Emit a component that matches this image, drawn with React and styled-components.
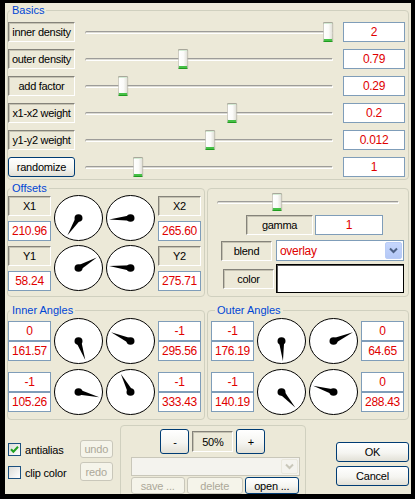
import React from 'react'
import styled, { createGlobalStyle } from 'styled-components'

const GlobalStyle = createGlobalStyle`
  html, body {
    margin: 0;
    padding: 0;
    background: #000;
  }
  body {
    font-family: "Liberation Sans", Arial, sans-serif;
    font-size: 11px;
  }
  * {
    box-sizing: border-box;
  }
`

const Window = styled.div`
  margin: 3px 0 0 5px;
  width: 406px;
  height: 491px;
  padding: 0 2px;
  background: #ece9d8;
  overflow: hidden;
  display: flex;
  flex-direction: column;
`

const Group = styled.fieldset`
  margin: ${p => p.$mt || 0}px 0 0;
  padding: ${p => p.$pad || '0'};
  width: ${p => p.$w}px;
  ${p => (p.$h ? `height: ${p.$h}px;` : '')}
  border: 1px solid #d0d0bf;
  border-radius: 4px;
  min-width: 0;
`

const Legend = styled.legend`
  margin-left: ${p => p.$ml || 2}px;
  padding: 0 2px;
  color: #0046d5;
  font-size: 11px;
  line-height: 12px;
`

const Rows = styled.div`
  display: flex;
  flex-direction: column;
  gap: 7px;
`

const BasicRow = styled.div`
  display: grid;
  grid-template-columns: 67px 258px 62px;
  column-gap: 5px;
  align-items: center;
  height: 20px;
`

const Caption = styled.div`
  width: ${p => (p.$w ? `${p.$w}px` : 'auto')};
  height: ${p => p.$h || 20}px;
  border: 1px solid;
  border-color: #85837a #ffffff #ffffff #85837a;
  box-shadow: inset 1px 1px 0 #c5c2b2;
  display: flex;
  align-items: center;
  justify-content: center;
  color: #000;
  font-size: 11px;
  font-weight: 400;
  letter-spacing: -0.3px;
  white-space: nowrap;
`

const ValueBox = styled.div`
  width: ${p => (p.$w ? `${p.$w}px` : 'auto')};
  height: ${p => p.$h || 20}px;
  background: #fff;
  border: 1px solid #7f9db9;
  color: #e00000;
  font-size: 12px;
  letter-spacing: -0.3px;
  display: flex;
  align-items: center;
  justify-content: center;
`

const Button = styled.button`
  width: ${p => p.$w}px;
  height: ${p => p.$h}px;
  padding: 0;
  font: 400 11px "Liberation Sans", Arial, sans-serif;
  letter-spacing: -0.2px;
  color: #000;
  border: 1px solid #003c74;
  border-radius: 3px;
  background: linear-gradient(180deg, #ffffff 0%, #f5f5f1 55%, #e2e0d6 100%);
  &:disabled {
    border-color: #c9c7ba;
    color: #aca899;
    background: #f5f4ea;
  }
`

const SliderBox = styled.div`
  display: flex;
  align-items: center;
  height: ${p => p.$h}px;
  padding: 0 ${p => p.$pr}px 0 ${p => p.$pl}px;
`

const Track = styled.div`
  position: relative;
  flex: 1;
  height: 3px;
  border-radius: 2px;
  border-top: 1px solid #9d9c99;
  border-left: 1px solid #b5b4ae;
  border-bottom: 1px solid #ffffff;
  border-right: 1px solid #ffffff;
  background: #dcdbd3;
`

const Lane = styled.div`
  position: absolute;
  left: 1px;
  right: 3px;
  top: 0;
  height: 0;
`

const Thumb = styled.div`
  position: absolute;
  top: 0;
  width: 11px;
  height: ${p => p.$h}px;
  transform: translate(-50%, -50%);
  border: 1px solid #a8a79b;
  border-bottom-color: #1e9b1e;
  border-radius: 2px;
  background: linear-gradient(90deg, #ffffff 0%, #fbfbf9 55%, #dfded6 100%);
  box-shadow: inset 0 -2px 0 #46c046, inset 0 1px 0 #d4ecd4;
`

const Slider = ({ pos, h = 20, thumbH = 20, pl, pr }) => (
  <SliderBox $h={h} $pl={pl} $pr={pr}>
    <Track>
      <Lane>
        <Thumb $h={thumbH} style={{ left: `${pos * 100}%` }} />
      </Lane>
    </Track>
  </SliderBox>
)

const MidRow = styled.div`
  display: flex;
  gap: 2px;
  margin-top: 2px;
`

const DialGrid = styled.div`
  display: flex;
  flex-direction: column;
  gap: ${p => p.$gap}px;
`

const DialRow = styled.div`
  display: grid;
  grid-template-columns: ${p => p.$cols};
  column-gap: 3px;
  align-items: center;
  height: 46px;
`

const Stack = styled.div`
  display: flex;
  flex-direction: column;
  gap: ${p => p.$gap || 0}px;
`

const GammaBody = styled.div`
  display: flex;
  flex-direction: column;
`

const FormRow = styled.div`
  display: flex;
  align-items: center;
  gap: ${p => p.$gap}px;
  margin: ${p => p.$mt}px 0 0 ${p => p.$ml}px;
`

const SliderHolder = styled.div`
  width: ${p => p.$w}px;
`

const Select = styled.div`
  width: ${p => p.$w}px;
  height: ${p => p.$h}px;
  border: 1px solid ${p => (p.$disabled ? '#c9c7ba' : '#7f9db9')};
  background: ${p => (p.$disabled ? '#f4f3ee' : '#fff')};
  display: flex;
  align-items: center;
  justify-content: space-between;
  padding: 1px;
`

const SelectText = styled.span`
  padding-left: 2px;
  color: #e00000;
  font-size: 12px;
  letter-spacing: -0.3px;
`

const DropButton = styled.div`
  width: 17px;
  height: 100%;
  border-radius: 2px;
  display: flex;
  align-items: center;
  justify-content: center;
  background: ${p =>
    p.$disabled ? '#f4f3ee' : 'linear-gradient(180deg, #c6d6fc 0%, #b4c8f6 100%)'};
  border: 1px solid ${p => (p.$disabled ? '#eae8dd' : '#b9ccf6')};
`

const ColorBox = styled.div`
  width: 128px;
  height: 29px;
  background: #fff;
  border: 1px solid #000;
  box-shadow: inset 1px 1px 0 #555;
`

const BottomBar = styled.div`
  display: flex;
  align-items: flex-start;
  flex: 1;
`

const CheckCol = styled.div`
  width: 73px;
  padding: 23px 0 0 1px;
  display: flex;
  flex-direction: column;
  gap: 10px;
`

const CheckRow = styled.label`
  display: flex;
  align-items: center;
  gap: 4px;
  height: 13px;
  color: #000;
  font-size: 11px;
  letter-spacing: -0.2px;
`

const CheckBox = styled.span`
  width: 13px;
  height: 13px;
  border: 1px solid #1c5180;
  background: linear-gradient(135deg, #dcdcd7 0%, #ffffff 100%);
  display: flex;
  align-items: center;
  justify-content: center;
`

const ButtonCol = styled.div`
  display: flex;
  flex-direction: column;
  gap: 4px;
  padding-top: ${p => p.$pt}px;
  margin-left: ${p => p.$ml || 0}px;
`

const FileGroup = styled.div`
  margin: 5px 0 0 7px;
  width: 187px;
  height: 80px;
  border: 1px solid #d0d0bf;
  border-radius: 4px;
  padding-top: 3px;
  display: flex;
  flex-direction: column;
`

const ZoomRow = styled.div`
  display: flex;
  justify-content: center;
  align-items: center;
  gap: 3px;
`

const Chevron = ({ color }) => (
  <svg width="9" height="7" viewBox="0 0 9 7">
    <path d="M1 1.5 L4.5 5 L8 1.5" fill="none" stroke={color} strokeWidth="2" />
  </svg>
)

const Check = () => (
  <svg width="9" height="9" viewBox="0 0 9 9">
    <path d="M1 4.2 L3.4 6.8 L8 1.8" fill="none" stroke="#21a121" strokeWidth="2" />
  </svg>
)

const Dial = ({ angle }) => {
  const cx = 24.5
  const cy = 23
  const k = 22.5 / 24
  const len = 21.5
  const a = (angle * Math.PI) / 180
  const dx = Math.sin(a)
  const dy = -Math.cos(a) * k
  const tx = cx + dx * len
  const ty = cy + dy * len
  const w = 2.7
  const px = Math.cos(a)
  const py = Math.sin(a)
  const pts = `${tx},${ty} ${cx + px * w},${cy + py * w} ${cx - px * w},${cy - py * w}`
  return (
    <svg width="49" height="46" viewBox="0 0 49 46">
      <ellipse cx={cx} cy={cy} rx="24" ry="22.5" fill="#fff" stroke="#000" />
      <polygon points={pts} fill="#000" />
      <ellipse cx={cx} cy={cy} rx="4" ry="3.8" fill="#000" />
    </svg>
  )
}

const basics = [
  { label: 'inner density', pos: 0.996, value: '2' },
  { label: 'outer density', pos: 0.397, value: '0.79' },
  { label: 'add factor', pos: 0.148, value: '0.29' },
  { label: 'x1-x2 weight', pos: 0.598, value: '0.2' },
  { label: 'y1-y2 weight', pos: 0.508, value: '0.012' },
  { label: 'randomize', pos: 0.209, value: '1', button: true },
]

const offsets = [
  { a: 'X1', av: '210.96', b: 'X2', bv: '265.60' },
  { a: 'Y1', av: '58.24', b: 'Y2', bv: '275.71' },
]

const inner = [
  { l: ['0', '161.57'], r: ['-1', '295.56'] },
  { l: ['-1', '105.26'], r: ['-1', '333.43'] },
]

const outer = [
  { l: ['-1', '176.19'], r: ['0', '64.65'] },
  { l: ['-1', '140.19'], r: ['0', '288.43'] },
]

const PairStack = ({ values }) => (
  <Stack>
    <ValueBox>{values[0]}</ValueBox>
    <ValueBox>{values[1]}</ValueBox>
  </Stack>
)

const AngleGroup = ({ title, rows, width, ml, pl }) => (
  <Group $w={width} $mt={5} $pad={`2px 0 4px ${pl}px`}>
    <Legend $ml={ml}>{title}</Legend>
    <DialGrid $gap={5}>
      {rows.map((r, i) => (
        <DialRow key={i} $cols="43px 49px 49px 43px">
          <PairStack values={r.l} />
          <Dial angle={parseFloat(r.l[1])} />
          <Dial angle={parseFloat(r.r[1])} />
          <PairStack values={r.r} />
        </DialRow>
      ))}
    </DialGrid>
  </Group>
)

export default function App() {
  return (
    <>
      <GlobalStyle />
      <Window>
        <Group $w={402} $mt={1} $pad="6px 3px 2px 0">
          <Legend $ml={2}>Basics</Legend>
          <Rows>
            {basics.map(row => (
              <BasicRow key={row.label}>
                {row.button ? (
                  <Button $w={67} $h={20}>
                    {row.label}
                  </Button>
                ) : (
                  <Caption>{row.label}</Caption>
                )}
                <Slider pos={row.pos} pl={5} pr={5} />
                <ValueBox>{row.value}</ValueBox>
              </BasicRow>
            ))}
          </Rows>
        </Group>

        <MidRow>
          <Group $w={198} $h={115} $pad="1px 0 4px 0">
            <Legend $ml={2}>Offsets</Legend>
            <DialGrid $gap={4}>
              {offsets.map(r => (
                <DialRow key={r.a} $cols="43px 49px 49px 43px">
                  <Stack $gap={5}>
                    <Caption>{r.a}</Caption>
                    <ValueBox>{r.av}</ValueBox>
                  </Stack>
                  <Dial angle={parseFloat(r.av)} />
                  <Dial angle={parseFloat(r.bv)} />
                  <Stack $gap={5}>
                    <Caption>{r.b}</Caption>
                    <ValueBox>{r.bv}</ValueBox>
                  </Stack>
                </DialRow>
              ))}
            </DialGrid>
          </Group>

          <Group $w={202} $h={109} $mt={6} $pad="4px 0 4px 0">
            <GammaBody>
              <FormRow $mt={0} $ml={9} $gap={0}>
                <SliderHolder $w={182}>
                  <Slider pos={0.33} h={18} thumbH={18} pl={0} pr={0} />
                </SliderHolder>
              </FormRow>
              <FormRow $mt={4} $ml={38} $gap={2}>
                <Caption $w={67}>gamma</Caption>
                <ValueBox $w={68}>1</ValueBox>
              </FormRow>
              <FormRow $mt={5} $ml={13} $gap={4}>
                <Caption $w={51}>blend</Caption>
                <Select $w={128} $h={21}>
                  <SelectText>overlay</SelectText>
                  <DropButton>
                    <Chevron color="#4d6185" />
                  </DropButton>
                </Select>
              </FormRow>
              <FormRow $mt={3} $ml={15} $gap={2}>
                <Caption $w={51}>color</Caption>
                <ColorBox />
              </FormRow>
            </GammaBody>
          </Group>
        </MidRow>

        <MidRow>
          <AngleGroup title="Inner Angles" rows={inner} width={198} ml={2} pl={0} />
          <AngleGroup title="Outer Angles" rows={outer} width={202} ml={4} pl={3} />
        </MidRow>

        <BottomBar>
          <CheckCol>
            <CheckRow>
              <CheckBox>
                <Check />
              </CheckBox>
              antialias
            </CheckRow>
            <CheckRow>
              <CheckBox />
              clip color
            </CheckRow>
          </CheckCol>
          <ButtonCol $pt={20}>
            <Button $w={33} $h={18} disabled>
              undo
            </Button>
            <Button $w={33} $h={19} disabled>
              redo
            </Button>
          </ButtonCol>
          <FileGroup>
            <ZoomRow>
              <Button $w={29} $h={25}>
                -
              </Button>
              <Caption $w={41} $h={21}>
                50%
              </Caption>
              <Button $w={29} $h={25}>
                +
              </Button>
            </ZoomRow>
            <FormRow $mt={3} $ml={10} $gap={0}>
              <Select $w={169} $h={19} $disabled>
                <span />
                <DropButton $disabled>
                  <Chevron color="#c9c7ba" />
                </DropButton>
              </Select>
            </FormRow>
            <FormRow $mt={1} $ml={10} $gap={2}>
              <Button $w={54} $h={17} disabled>
                save ...
              </Button>
              <Button $w={56} $h={17} disabled>
                delete
              </Button>
              <Button $w={54} $h={17}>
                open ...
              </Button>
            </FormRow>
          </FileGroup>
          <ButtonCol $pt={22} $ml={30}>
            <Button $w={73} $h={20}>
              OK
            </Button>
            <Button $w={73} $h={20}>
              Cancel
            </Button>
          </ButtonCol>
        </BottomBar>
      </Window>
    </>
  )
}
